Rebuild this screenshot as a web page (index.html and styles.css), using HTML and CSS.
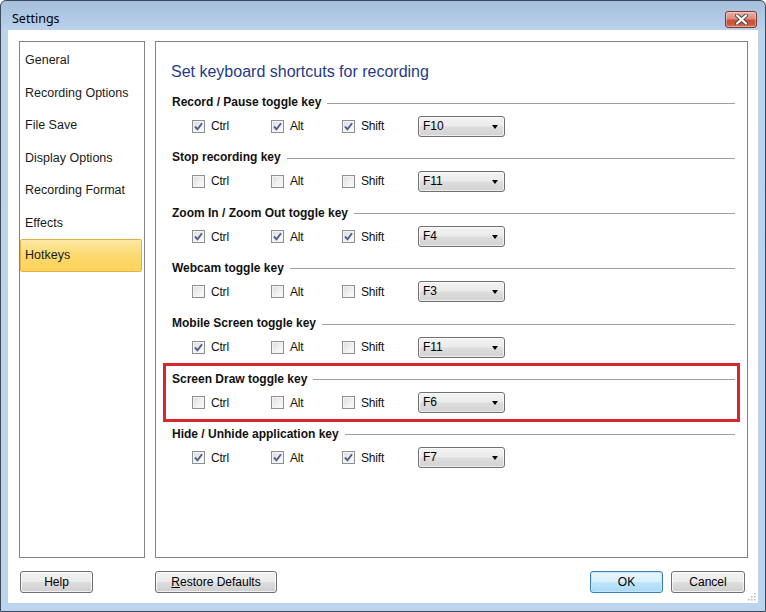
FILE: index.html
```html
<!DOCTYPE html>
<html>
<head>
<meta charset="utf-8">
<title>Settings</title>
<link rel="stylesheet" href="styles.css">
</head>
<body>
<div class="window">
  <div class="titlebar">
    <span class="title">Settings</span>
    <button class="close" aria-label="Close">
      <svg width="13" height="11" viewBox="0 0 13 11">
        <path d="M2 1.5 L11 9.5 M11 1.5 L2 9.5" stroke="#4b4b4b" stroke-width="4" stroke-linecap="round" fill="none"/>
        <path d="M2 1.5 L11 9.5 M11 1.5 L2 9.5" stroke="#ffffff" stroke-width="2.2" stroke-linecap="round" fill="none"/>
      </svg>
    </button>
  </div>
  <div class="client">
    <div class="panes">
      <ul class="nav">
        <li>General</li>
        <li>Recording Options</li>
        <li>File Save</li>
        <li>Display Options</li>
        <li>Recording Format</li>
        <li>Effects</li>
        <li class="active">Hotkeys</li>
      </ul>
      <section class="content">
        <h1 class="heading">Set keyboard shortcuts for recording</h1>

        <div class="group">
          <div class="gtitle"><span>Record / Pause toggle key</span></div>
          <div class="row">
            <label class="opt"><span class="cb checked"><svg viewBox="0 0 11 11"><path d="M2 5.5 L4.5 8.3 L9 2.3"/></svg></span>Ctrl</label>
            <label class="opt"><span class="cb checked"><svg viewBox="0 0 11 11"><path d="M2 5.5 L4.5 8.3 L9 2.3"/></svg></span>Alt</label>
            <label class="opt"><span class="cb checked"><svg viewBox="0 0 11 11"><path d="M2 5.5 L4.5 8.3 L9 2.3"/></svg></span>Shift</label>
            <div class="select">F10<span class="arrow"></span></div>
          </div>
        </div>

        <div class="group">
          <div class="gtitle"><span>Stop recording key</span></div>
          <div class="row">
            <label class="opt"><span class="cb"></span>Ctrl</label>
            <label class="opt"><span class="cb"></span>Alt</label>
            <label class="opt"><span class="cb"></span>Shift</label>
            <div class="select">F11<span class="arrow"></span></div>
          </div>
        </div>

        <div class="group">
          <div class="gtitle"><span>Zoom In / Zoom Out toggle key</span></div>
          <div class="row">
            <label class="opt"><span class="cb checked"><svg viewBox="0 0 11 11"><path d="M2 5.5 L4.5 8.3 L9 2.3"/></svg></span>Ctrl</label>
            <label class="opt"><span class="cb checked"><svg viewBox="0 0 11 11"><path d="M2 5.5 L4.5 8.3 L9 2.3"/></svg></span>Alt</label>
            <label class="opt"><span class="cb checked"><svg viewBox="0 0 11 11"><path d="M2 5.5 L4.5 8.3 L9 2.3"/></svg></span>Shift</label>
            <div class="select">F4<span class="arrow"></span></div>
          </div>
        </div>

        <div class="group">
          <div class="gtitle"><span>Webcam toggle key</span></div>
          <div class="row">
            <label class="opt"><span class="cb"></span>Ctrl</label>
            <label class="opt"><span class="cb"></span>Alt</label>
            <label class="opt"><span class="cb"></span>Shift</label>
            <div class="select">F3<span class="arrow"></span></div>
          </div>
        </div>

        <div class="group">
          <div class="gtitle"><span>Mobile Screen toggle key</span></div>
          <div class="row">
            <label class="opt"><span class="cb checked"><svg viewBox="0 0 11 11"><path d="M2 5.5 L4.5 8.3 L9 2.3"/></svg></span>Ctrl</label>
            <label class="opt"><span class="cb"></span>Alt</label>
            <label class="opt"><span class="cb"></span>Shift</label>
            <div class="select">F11<span class="arrow"></span></div>
          </div>
        </div>

        <div class="group highlighted">
          <div class="redbox"></div>
          <div class="gtitle"><span>Screen Draw toggle key</span></div>
          <div class="row">
            <label class="opt"><span class="cb"></span>Ctrl</label>
            <label class="opt"><span class="cb"></span>Alt</label>
            <label class="opt"><span class="cb"></span>Shift</label>
            <div class="select">F6<span class="arrow"></span></div>
          </div>
        </div>

        <div class="group">
          <div class="gtitle"><span>Hide / Unhide application key</span></div>
          <div class="row">
            <label class="opt"><span class="cb checked"><svg viewBox="0 0 11 11"><path d="M2 5.5 L4.5 8.3 L9 2.3"/></svg></span>Ctrl</label>
            <label class="opt"><span class="cb checked"><svg viewBox="0 0 11 11"><path d="M2 5.5 L4.5 8.3 L9 2.3"/></svg></span>Alt</label>
            <label class="opt"><span class="cb checked"><svg viewBox="0 0 11 11"><path d="M2 5.5 L4.5 8.3 L9 2.3"/></svg></span>Shift</label>
            <div class="select">F7<span class="arrow"></span></div>
          </div>
        </div>
      </section>
    </div>
    <div class="buttons">
      <button class="btn help">Help</button>
      <button class="btn restore"><u>R</u>estore Defaults</button>
      <span class="spacer"></span>
      <button class="btn ok">OK</button>
      <button class="btn cancel">Cancel</button>
    </div>
    <svg class="grip" width="10" height="10" viewBox="0 0 10 10">
      <rect x="7" y="1" width="1.5" height="1.5" fill="#b9b9b9"/>
      <rect x="4" y="4" width="1.5" height="1.5" fill="#b9b9b9"/>
      <rect x="7" y="4" width="1.5" height="1.5" fill="#b9b9b9"/>
      <rect x="1" y="7" width="1.5" height="1.5" fill="#b9b9b9"/>
      <rect x="4" y="7" width="1.5" height="1.5" fill="#b9b9b9"/>
      <rect x="7" y="7" width="1.5" height="1.5" fill="#b9b9b9"/>
    </svg>
  </div>
</div>
</body>
</html>
```

FILE: styles.css
```css
* { box-sizing: border-box; }
html, body { margin: 0; padding: 0; }
body {
  width: 766px;
  height: 612px;
  overflow: hidden;
  background: #ffffff;
  font-family: "Liberation Sans", Arial, sans-serif;
  font-size: 12px;
  color: #000;
}
.window {
  width: 766px;
  height: 612px;
  border: 1px solid #3d4a5a;
  border-radius: 6px 6px 0 0;
  background: linear-gradient(to bottom, #a6bfdc 0px, #b3cbe6 20px, #bcd3ec 30px, #bdd4ee 100%);
  display: flex;
  flex-direction: column;
  padding: 0 7px 8px 7px;
  position: relative;
}
.titlebar {
  height: 29px;
  display: flex;
  align-items: center;
  position: relative;
}
.title {
  font-family: "Noto Sans", "Liberation Sans", sans-serif;
  font-size: 12.5px;
  padding-left: 4px;
  margin-top: 5px;
  color: #000;
}
.close {
  position: absolute;
  right: 1px;
  top: 10px;
  width: 32px;
  height: 17px;
  border: 1px solid #7b3b33;
  border-radius: 3px;
  padding: 0;
  background: linear-gradient(to bottom, #eab2a6 0%, #dc8b79 45%, #c8533a 55%, #c9553a 80%, #dc7b5f 100%);
  box-shadow: inset 0 0 0 1px rgba(255,255,255,0.35);
  display: flex;
  align-items: center;
  justify-content: center;
}
.close svg { display: block; }

.client {
  flex: 1;
  background: #ffffff;
  padding: 11px 10px 0 11px;
  display: flex;
  flex-direction: column;
  position: relative;
}
.panes {
  display: flex;
  gap: 10px;
  height: 517px;
}
.nav {
  list-style: none;
  margin: 0;
  padding: 2px 0 0 0;
  width: 126px;
  border: 1px solid #828282;
}
.nav li {
  height: 32.5px;
  line-height: 32.5px;
  padding-left: 5px;
  font-size: 12.5px;
  color: #1a1a1a;
  margin-right: 2px;
}
.nav li.active {
  background: linear-gradient(to bottom, #fde9a6 0%, #fcd96e 50%, #fcd25a 100%);
  border: 1px solid #dfb24b;
  border-radius: 2px;
  padding-left: 4px;
  line-height: 30.5px;
}
.content {
  flex: 1;
  border: 1px solid #828282;
  padding: 20px 12px 0 0;
}
.heading {
  margin: 0 0 12px 15px;
  height: 20px;
  line-height: 20px;
  font-size: 16px;
  font-weight: normal;
  color: #1f3b8c;
}
.group {
  position: relative;
  margin-bottom: 12.33px;
}
.gtitle {
  height: 16px;
  display: flex;
  align-items: center;
  padding-left: 16px;
}
.gtitle span {
  font-weight: bold;
  font-size: 12px;
  color: #111;
  white-space: nowrap;
}
.gtitle::after {
  content: "";
  flex: 1;
  margin-left: 6px;
  margin-top: 2px;
  height: 1px;
  background: #a0a0a0;
}
.row {
  margin-top: 5px;
  height: 22px;
  display: grid;
  grid-template-columns: 79px 71px 76px 87px;
  align-items: center;
  padding-left: 36px;
}
.opt {
  display: flex;
  align-items: center;
  gap: 6px;
  font-size: 12px;
  color: #111;
  letter-spacing: -0.2px;
}
.cb {
  width: 13px;
  height: 13px;
  border: 1px solid #8e8f8f;
  background: linear-gradient(135deg, #dcdcdc 0%, #f0f0f0 55%, #fdfdfd 100%);
  box-shadow: inset 0 0 0 1px #f4f4f4;
  display: flex;
  align-items: center;
  justify-content: center;
  flex: none;
}
.cb svg {
  width: 11px;
  height: 11px;
  display: block;
}
.cb svg path {
  fill: none;
  stroke: #4b5f96;
  stroke-width: 1.9;
}
.select {
  width: 87px;
  height: 21px;
  border: 1px solid #707070;
  border-radius: 3px;
  background: linear-gradient(to bottom, #f3f3f3 0%, #ebebeb 48%, #dddddd 52%, #d2d2d2 100%);
  box-shadow: inset 0 0 0 1px rgba(255,255,255,0.6);
  font-size: 12px;
  line-height: 19px;
  padding-left: 4px;
  position: relative;
  color: #000;
}
.arrow {
  position: absolute;
  right: 6px;
  top: 8px;
  width: 0;
  height: 0;
  border-left: 3.5px solid transparent;
  border-right: 3.5px solid transparent;
  border-top: 4px solid #000;
}
.redbox {
  position: absolute;
  left: 7px;
  top: -8px;
  width: 577px;
  height: 59px;
  border: 3px solid #d9262d;
  pointer-events: none;
}

.buttons {
  display: flex;
  align-items: center;
  margin-top: 13px;
  height: 22px;
}
.btn {
  height: 22px;
  border: 1px solid #707070;
  border-radius: 3px;
  background: linear-gradient(to bottom, #f2f2f2 0%, #ebebeb 48%, #dddddd 52%, #cfcfcf 100%);
  box-shadow: inset 0 0 0 1px rgba(255,255,255,0.7);
  font-family: "Liberation Sans", Arial, sans-serif;
  font-size: 12px;
  color: #000;
  padding: 0;
}
.help { width: 73px; margin-left: 1px; }
.restore { width: 122px; margin-left: 62px; }
.spacer { flex: 1; }
.ok {
  width: 73px;
  border-color: #3c7fb1;
  background: linear-gradient(to bottom, #eaf6fd 0%, #d9f0fc 48%, #bee6fd 52%, #a7d9f5 100%);
  box-shadow: inset 0 0 0 1px #c4e5f6;
}
.cancel { width: 74px; margin-left: 8px; margin-right: 3px; }
.grip {
  position: absolute;
  right: 1px;
  bottom: 1px;
}
```
